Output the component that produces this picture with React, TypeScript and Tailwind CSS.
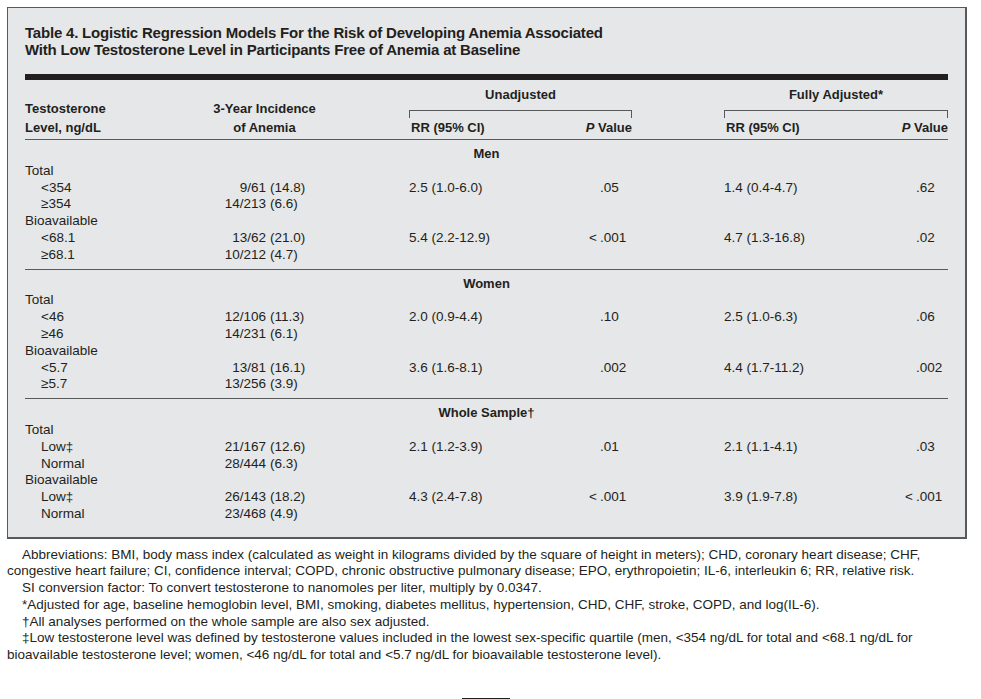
import React from "react";

type Row = {
  label: string;
  indent?: boolean;
  num?: string;
  pct?: string;
  rr?: string;
  p?: [string, string];
  rr2?: string;
  p2?: [string, string];
};

type Section = { title: string; rows: Row[] };

const sections: Section[] = [
  {
    title: "Men",
    rows: [
      { label: "Total" },
      { label: "<354", indent: true, num: "9/61", pct: "(14.8)", rr: "2.5 (1.0-6.0)", p: ["", ".05"], rr2: "1.4 (0.4-4.7)", p2: ["", ".62"] },
      { label: "\u2265354", indent: true, num: "14/213", pct: "(6.6)" },
      { label: "Bioavailable" },
      { label: "<68.1", indent: true, num: "13/62", pct: "(21.0)", rr: "5.4 (2.2-12.9)", p: ["<", ".001"], rr2: "4.7 (1.3-16.8)", p2: ["", ".02"] },
      { label: "\u226568.1", indent: true, num: "10/212", pct: "(4.7)" },
    ],
  },
  {
    title: "Women",
    rows: [
      { label: "Total" },
      { label: "<46", indent: true, num: "12/106", pct: "(11.3)", rr: "2.0 (0.9-4.4)", p: ["", ".10"], rr2: "2.5 (1.0-6.3)", p2: ["", ".06"] },
      { label: "\u226546", indent: true, num: "14/231", pct: "(6.1)" },
      { label: "Bioavailable" },
      { label: "<5.7", indent: true, num: "13/81", pct: "(16.1)", rr: "3.6 (1.6-8.1)", p: ["", ".002"], rr2: "4.4 (1.7-11.2)", p2: ["", ".002"] },
      { label: "\u22655.7", indent: true, num: "13/256", pct: "(3.9)" },
    ],
  },
  {
    title: "Whole Sample\u2020",
    rows: [
      { label: "Total" },
      { label: "Low\u2021", indent: true, num: "21/167", pct: "(12.6)", rr: "2.1 (1.2-3.9)", p: ["", ".01"], rr2: "2.1 (1.1-4.1)", p2: ["", ".03"] },
      { label: "Normal", indent: true, num: "28/444", pct: "(6.3)" },
      { label: "Bioavailable" },
      { label: "Low\u2021", indent: true, num: "26/143", pct: "(18.2)", rr: "4.3 (2.4-7.8)", p: ["<", ".001"], rr2: "3.9 (1.9-7.8)", p2: ["<", ".001"] },
      { label: "Normal", indent: true, num: "23/468", pct: "(4.9)" },
    ],
  },
];

const PCell: React.FC<{ value?: [string, string]; className: string }> = ({ value, className }) => (
  <div className={`${className} flex whitespace-nowrap`}>
    {value && (
      <>
        <span className="w-[11px] shrink-0">{value[0]}</span>
        <span>{value[1]}</span>
      </>
    )}
  </div>
);

const DataRow: React.FC<{ row: Row }> = ({ row }) => (
  <div className="flex h-[16.8px] leading-[16.8px] whitespace-nowrap">
    <div className={`w-[199px] ${row.indent ? "pl-[16px]" : ""}`}>{row.label}</div>
    <div className="w-[185px]">
      {row.num && (
        <>
          <span className="inline-block w-[42px] text-right">{row.num}</span>
          <span className="ml-[4px]">{row.pct}</span>
        </>
      )}
    </div>
    <div className="w-[180px]">{row.rr}</div>
    <PCell value={row.p} className="w-[135px]" />
    <div className="w-[181px]">{row.rr2}</div>
    <PCell value={row.p2} className="w-[43px]" />
  </div>
);

const Group: React.FC<{ title: string; width: string }> = ({ title, width }) => (
  <div className={`${width} flex flex-col`}>
    <div className="text-center">{title}</div>
    <div className="mt-[6px] h-[8px] border-t border-x border-[#58595b]" />
    <div className="flex justify-between pl-[2px]">
      <span>RR (95% CI)</span>
      <span>
        <i>P</i> Value
      </span>
    </div>
  </div>
);

export default function App() {
  return (
    <div className="w-[981px] h-[699px] overflow-hidden bg-white text-[#231f20] font-['Liberation_Sans',Arial,sans-serif]">
      <div className="ml-[7px] mt-[7px] w-[960px] border-t border-l border-r-2 border-b-2 border-[#58595b] bg-[#e6e7e8] pl-[17px] pr-[17px] pt-[16px] pb-[14px]">
        <h1 className="font-bold text-[15px] leading-[17px] tracking-[-0.2px] whitespace-nowrap">
          Table 4. Logistic Regression Models For the Risk of Developing Anemia Associated
          <br />
          With Low Testosterone Level in Participants Free of Anemia at Baseline
        </h1>
        <div className="mt-[16px] h-[6px] bg-[#231f20]" />

        <div className="flex items-end h-[60px] pb-[2.5px] border-b border-[#58595b] font-bold text-[13px] leading-[19px] whitespace-nowrap">
          <div className="w-[199px]">
            Testosterone
            <br />
            Level, ng/dL
          </div>
          <div className="w-[81px] flex flex-col items-center">
            <span>3-Year Incidence</span>
            <span>of Anemia</span>
          </div>
          <div className="w-[104px]" />
          <Group title="Unadjusted" width="w-[223px]" />
          <div className="w-[92px]" />
          <Group title="Fully Adjusted*" width="w-[224px]" />
        </div>

        {sections.map((s, i) => (
          <div
            key={s.title}
            className={`pt-[6px] text-[13.5px] ${i < sections.length - 1 ? "pb-[5px] border-b border-[#58595b]" : ""}`}
          >
            <div className="text-center font-bold text-[13px] leading-[16.8px]">{s.title}</div>
            {s.rows.map((r, j) => (
              <DataRow key={j} row={r} />
            ))}
          </div>
        ))}
      </div>

      {/* footnotes */}
      <div className="mt-[8px] pl-[7px] text-[13.5px] leading-[16.7px] whitespace-nowrap">
        <p className="indent-[15px]">
          Abbreviations: BMI, body mass index (calculated as weight in kilograms divided by the square of height in meters); CHD, coronary heart disease; CHF,
          <br />
          congestive heart failure; CI, confidence interval; COPD, chronic obstructive pulmonary disease; EPO, erythropoietin; IL-6, interleukin 6; RR, relative risk.
        </p>
        <p className="indent-[15px]">SI conversion factor: To convert testosterone to nanomoles per liter, multiply by 0.0347.</p>
        <p className="indent-[15px]">
          *Adjusted for age, baseline hemoglobin level, BMI, smoking, diabetes mellitus, hypertension, CHD, CHF, stroke, COPD, and log(IL-6).
        </p>
        <p className="indent-[15px]">{"\u2020"}All analyses performed on the whole sample are also sex adjusted.</p>
        <p className="indent-[15px]">
          {"\u2021"}Low testosterone level was defined by testosterone values included in the lowest sex-specific quartile (men, {"<"}354 ng/dL for total and {"<"}68.1 ng/dL for
          <br />
          bioavailable testosterone level; women, {"<"}46 ng/dL for total and {"<"}5.7 ng/dL for bioavailable testosterone level).
        </p>
      </div>

      <div className="mt-[34px] ml-[462px] w-[48px] h-[2px] bg-[#231f20]" />
    </div>
  );
}
